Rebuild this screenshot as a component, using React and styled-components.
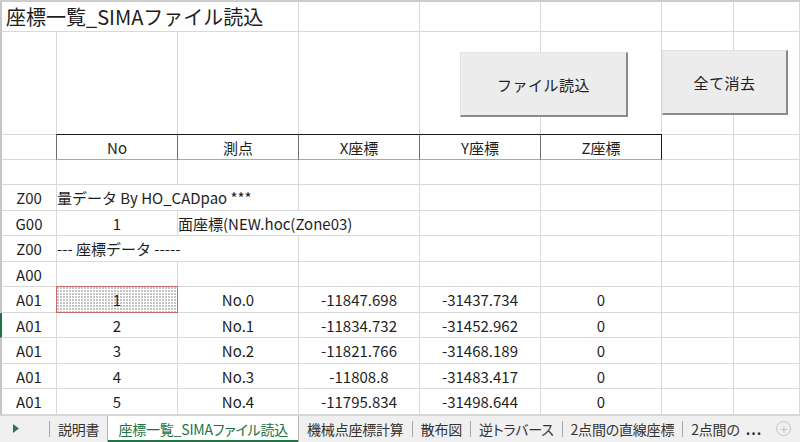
import React from 'react';
import styled, { createGlobalStyle, css } from 'styled-components';

const GlobalStyle = createGlobalStyle`
  html, body {
    margin: 0;
    height: 100%;
    background: #fff;
  }
  #root {
    height: 100%;
  }
`;

const FONT = `"Noto Sans CJK JP", "Noto Sans", "Liberation Sans", sans-serif`;
const GRID = '#d9d9d9';

const Workbook = styled.div`
  display: flex;
  flex-direction: column;
  height: 100vh;
  overflow: hidden;
  font-family: ${FONT};
  color: #1e1e1e;
`;

const Sheet = styled.div`
  position: relative;
  display: grid;
  grid-template-columns: 57px repeat(5, 121px) 72px 1fr;
  grid-template-rows: 30px 103px 25px 25px repeat(9, 25.5px);
  border-top: 2px solid #cdcdcd;
`;

const Cell = styled.div`
  grid-column: span ${p => p.$span || 1};
  box-sizing: border-box;
  display: flex;
  align-items: center;
  justify-content: ${p => (p.$align === 'left' ? 'flex-start' : 'center')};
  padding: 1px ${p => (p.$align === 'left' ? '0' : '2px')} 0;
  border-right: 1px solid ${GRID};
  border-bottom: 1px solid ${GRID};
  font-size: 15px;
  white-space: nowrap;
  overflow: visible;
  ${p =>
    p.$first &&
    css`
      border-left: 2px solid ${p.$mark ? '#217346' : '#c6c6c6'};
    `}
`;

const TitleCell = styled(Cell)`
  font-size: 20px;
  padding-left: 4px;
  padding-top: 0;
`;

const HeaderCell = styled(Cell)`
  margin-top: -1px;
  border-top: 1px solid #1a1a1a;
  border-right-color: ${p => (p.$last ? '#1a1a1a' : '#707070')};
  border-bottom-color: #a8a8a8;
  ${p =>
    p.$lead &&
    css`
      margin-left: -1px;
      border-left: 1px solid #707070;
    `}
`;

const SelectedCell = styled(Cell)`
  margin: -1px 0 0 -1px;
  border: 1px solid #c46a6a;
  background-color: #fff;
  background-image: radial-gradient(circle at 1px 1px, #a4a4a4 0.6px, transparent 0.9px);
  background-size: 3px 3px;
`;

const ActionButton = styled.button`
  position: absolute;
  left: ${p => p.$left}px;
  top: ${p => p.$top}px;
  width: ${p => p.$width}px;
  height: ${p => p.$height}px;
  box-sizing: border-box;
  background: #ececec;
  border: 1px solid #e2e2e2;
  border-right: 2px solid #8a8a8a;
  border-bottom: 2px solid #8a8a8a;
  font-family: ${FONT};
  font-size: 15px;
  color: #222;
  padding: 0;
  letter-spacing: 0.5px;
`;

const TabBar = styled.div`
  flex: 1;
  display: flex;
  align-items: stretch;
  background: #f0f0f0;
  border-top: 1px solid #d4d4d4;
  font-size: 14px;
  font-feature-settings: 'palt';
  letter-spacing: -0.2px;
  color: #333;
  & > * {
    flex-shrink: 0;
  }
`;

const NavArrow = styled.div`
  width: 49px;
  box-sizing: border-box;
  display: flex;
  align-items: center;
  padding-left: 13px;
`;

const Separator = styled.span`
  width: 1px;
  height: 16px;
  align-self: center;
  background: #a8a8a8;
`;

const Tab = styled.div`
  display: flex;
  align-items: center;
  padding: 0 ${p => p.$pad || 8}px;
  white-space: nowrap;
  ${p =>
    p.$active &&
    css`
      background: #fff;
      color: #217346;
      border-left: 1px solid #b5b5b5;
      border-right: 1px solid #b5b5b5;
      box-shadow: inset 0 -2px 0 #217346;
    `}
`;

const More = styled.span`
  font-weight: 700;
  margin-left: 6px;
  letter-spacing: 1px;
`;

const AddSheet = styled.span`
  width: 13px;
  height: 13px;
  margin-left: 6px;
  align-self: center;
  border: 1px solid #c4c4c4;
  border-radius: 50%;
  display: flex;
  align-items: center;
  justify-content: center;
  color: #c4c4c4;
  font-size: 13px;
  line-height: 1;
`;

const points = [
  ['1', 'No.0', '-11847.698', '-31437.734'],
  ['2', 'No.1', '-11834.732', '-31452.962'],
  ['3', 'No.2', '-11821.766', '-31468.189'],
  ['4', 'No.3', '-11808.8', '-31483.417'],
  ['5', 'No.4', '-11795.834', '-31498.644']
];

function blanks(count) {
  return Array.from({ length: count }, (_, i) => <Cell key={'b' + i} />);
}

export default function App() {
  return (
    <Workbook>
      <GlobalStyle />
      <Sheet>
        <TitleCell $first $span={3} $align="left">
          座標一覧_SIMAファイル読込
        </TitleCell>
        {blanks(5)}

        <Cell $first />
        {blanks(7)}

        <Cell $first />
        <HeaderCell $lead>No</HeaderCell>
        <HeaderCell>測点</HeaderCell>
        <HeaderCell>X座標</HeaderCell>
        <HeaderCell>Y座標</HeaderCell>
        <HeaderCell $last>Z座標</HeaderCell>
        {blanks(2)}

        <Cell $first />
        {blanks(7)}

        <Cell $first>Z00</Cell>
        <Cell $span={2} $align="left">
          量データ By HO_CADpao ***
        </Cell>
        {blanks(5)}

        <Cell $first>G00</Cell>
        <Cell>1</Cell>
        <Cell $span={2} $align="left">
          面座標(NEW.hoc(Zone03)
        </Cell>
        {blanks(4)}

        <Cell $first>Z00</Cell>
        <Cell $span={2} $align="left">
          --- 座標データ -----
        </Cell>
        {blanks(5)}

        <Cell $first>A00</Cell>
        {blanks(7)}

        {points.map(([no, name, x, y], i) => (
          <React.Fragment key={no}>
            <Cell $first $mark={i === 1}>
              A01
            </Cell>
            {i === 0 ? <SelectedCell>{no}</SelectedCell> : <Cell>{no}</Cell>}
            <Cell>{name}</Cell>
            <Cell>{x}</Cell>
            <Cell>{y}</Cell>
            <Cell>0</Cell>
            {blanks(2)}
          </React.Fragment>
        ))}

        <ActionButton $left={460} $top={50} $width={168} $height={65}>
          ファイル読込
        </ActionButton>
        <ActionButton $left={662} $top={48} $width={126} $height={65}>
          全て消去
        </ActionButton>
      </Sheet>

      <TabBar>
        <NavArrow>
          <svg width="6" height="9" viewBox="0 0 6 9">
            <polygon points="0,0 6,4.5 0,9" fill="#3d6f4f" />
          </svg>
        </NavArrow>
        <Separator />
        <Tab>説明書</Tab>
        <Tab $active $pad={10}>
          座標一覧_SIMAファイル読込
        </Tab>
        <Tab>機械点座標計算</Tab>
        <Separator />
        <Tab>散布図</Tab>
        <Separator />
        <Tab>逆トラバース</Tab>
        <Separator />
        <Tab>2点間の直線座標</Tab>
        <Separator />
        <Tab>
          2点間の<More>...</More>
        </Tab>
        <AddSheet>+</AddSheet>
      </TabBar>
    </Workbook>
  );
}
